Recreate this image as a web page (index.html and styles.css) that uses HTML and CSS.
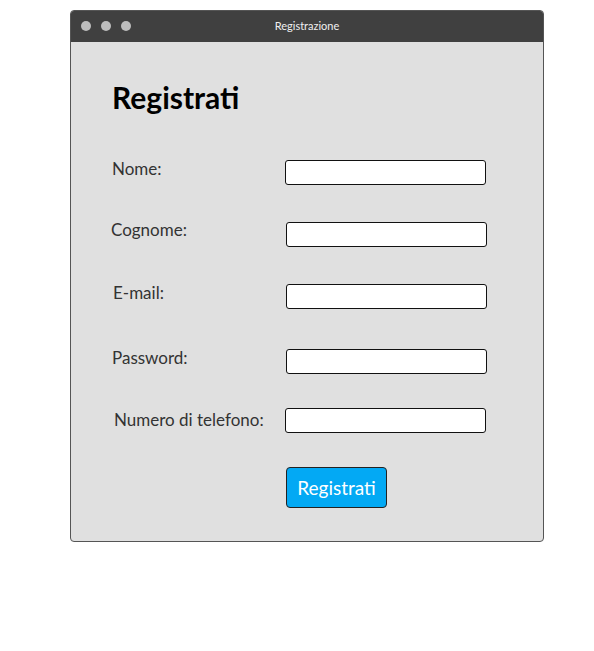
FILE: index.html
```html
<!DOCTYPE html>
<html lang="it">
<head>
<meta charset="utf-8">
<title>Registrazione</title>
<link rel="stylesheet" href="styles.css">
</head>
<body>
<div class="window">
  <div class="titlebar">
    <div class="dots"><span class="dot"></span><span class="dot"></span><span class="dot"></span></div>
    <div class="title">Registrazione</div>
  </div>
  <div class="content">
    <h1 class="heading">Registrati</h1>
    <form class="form">
      <div class="row r1"><label class="label">Nome:</label><input class="field" type="text"></div>
      <div class="row r2"><label class="label l2">Cognome:</label><input class="field f2" type="text"></div>
      <div class="row r3"><label class="label l3">E-mail:</label><input class="field f2" type="text"></div>
      <div class="row r4"><label class="label">Password:</label><input class="field f2" type="password"></div>
      <div class="row r5"><label class="label l5">Numero di telefono:</label><input class="field" type="text"></div>
      <div class="row r6"><span></span><button class="btn" type="button">Registrati</button></div>
    </form>
  </div>
</div>
</body>
</html>
```
FILE: styles.css
```css
* { box-sizing: border-box; }
html, body { margin: 0; padding: 0; background: #fff; }
body { padding: 10px 0 0 70px; font-family: "Lato", "Noto Sans", sans-serif; }
.window {
  width: 474px;
  height: 532px;
  border: 1px solid #555;
  border-radius: 4px;
  background: #e0e0e0;
  overflow: hidden;
}
.titlebar {
  height: 31px;
  background: #404040;
  display: flex;
  align-items: center;
  position: relative;
}
.dots { display: flex; gap: 10px; padding-left: 10px; margin-top: -2px; }
.dot { width: 10px; height: 10px; border-radius: 50%; background: #bdbdbd; }
.title {
  position: absolute; left: 0; right: 0; top: 0; bottom: 2px;
  display: flex; align-items: center; justify-content: center;
  color: #f0f0f0; font-size: 11px;
}
.content { padding: 37px 0 0 41px; }
.heading { margin: 0; font-size: 30px; font-weight: 700; color: #000; line-height: 36px; }
.form { margin-top: 45px; display: flex; flex-direction: column; }
.row { display: grid; grid-template-columns: 173px 201px; align-items: start; }
.label { font-size: 17px; color: #333; line-height: 20px; margin-top: -1px; }
.field { width: 201px; height: 25px; border: 1px solid #111; border-radius: 3px; background: #fff; }
.f2 { margin-left: 1px; }
.l2 { margin-left: -1px; margin-top: -2px; }
.l3 { margin-left: 1px; margin-top: -1px; }
.l5 { margin-left: 2px; margin-top: 2px; }
.r2 { margin-top: 37px; }
.r3 { margin-top: 37px; }
.r4 { margin-top: 40px; }
.r5 { margin-top: 34px; }
.r6 { margin-top: 34px; }
.btn {
  margin-left: 1px;
  width: 101px; height: 41px;
  background: #03a9f4; color: #fff;
  border: 1px solid #222; border-radius: 4px;
  font-family: inherit; font-size: 19px;
}
```
